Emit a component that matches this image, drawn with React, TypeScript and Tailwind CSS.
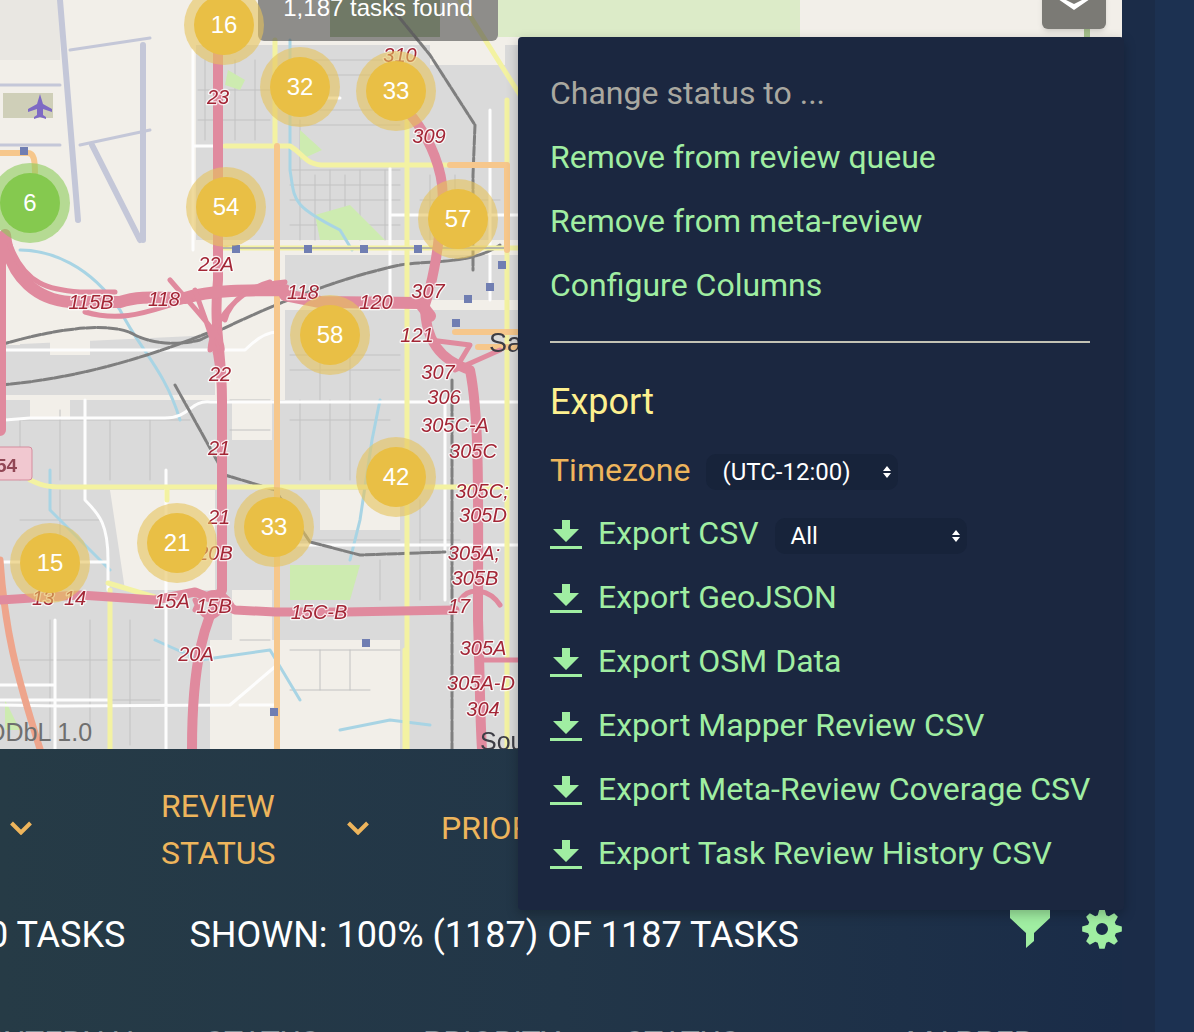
import React from 'react';

const menuLinks = ['Remove from review queue', 'Remove from meta-review', 'Configure Columns'];

const exportLinks = [
  'Export GeoJSON',
  'Export OSM Data',
  'Export Mapper Review CSV',
  'Export Meta-Review Coverage CSV',
  'Export Task Review History CSV',
];

const clusters = [
  { n: 16, x: 224, y: 25 },
  { n: 32, x: 300, y: 87 },
  { n: 33, x: 396, y: 91 },
  { n: 6, x: 30, y: 203, green: true },
  { n: 54, x: 226, y: 207 },
  { n: 57, x: 458, y: 219 },
  { n: 58, x: 330, y: 335 },
  { n: 42, x: 396, y: 477 },
  { n: 33, x: 274, y: 527 },
  { n: 21, x: 177, y: 543 },
  { n: 15, x: 50, y: 563 },
];

const roadLabels: [string, number, number][] = [
  ['23', 218, 104], ['310', 400, 62], ['309', 429, 143], ['22A', 216, 271], ['115B', 91, 309],
  ['118', 164, 306], ['118', 303, 299], ['120', 376, 309], ['307', 428, 298], ['121', 417, 342],
  ['22', 220, 381], ['307', 438, 379], ['306', 444, 404], ['305C-A', 455, 432], ['305C', 473, 458],
  ['21', 219, 455], ['21', 219, 524], ['305C;', 482, 498], ['305D', 483, 522], ['20B', 215, 560],
  ['305A;', 474, 560], ['305B', 475, 585], ['13', 43, 605], ['14', 75, 605], ['15A', 172, 608],
  ['15B', 214, 613], ['15C-B', 319, 619], ['17', 459, 613], ['20A', 196, 661], ['305A', 483, 655],
  ['305A-D', 481, 690], ['304', 483, 716],
];

const stations = [
  [24, 151], [236, 249], [308, 249], [364, 249], [418, 249], [502, 265], [490, 287], [468, 299],
  [456, 323], [366, 643], [274, 712],
];

// grid of thin minor streets on the grey residential blocks
const minorStreets = [
  'M205 60V140M235 60V140M255 60V140M300 120V240M315 175V240M330 170V240M345 175V240M360 170V240M385 170V240M430 175V240M455 175V240',
  'M198 90H270M198 120H270M290 60H400M290 75H380M290 110H400M290 125H400M290 170H400M290 185H400M290 200H400M290 225H400M420 200H500',
  'M20 420H190M20 480V420M60 410V480M110 420V480M150 420V480M290 420H390M330 400V480M350 400V480M300 400V480',
  'M240 640H270M290 650H400M320 650V690M350 650V690M290 690H370M50 620V740M90 620V740M20 660H160M20 700H160M130 620V745',
  'M420 500V600M445 400V600M420 540H460M230 400H270M230 430H270M290 540H400M380 560V600M290 355H400M290 370H400M320 345V400M350 345V400M20 520H100M60 490V560',
].join('');

function DownloadIcon() {
  return (
    <svg viewBox="0 0 32 32" className="mt-[6px] h-8 w-8 shrink-0 fill-[#a0eea2]">
      <path d="M12 0h8v9h9L16 22 3 9h9z" />
      <rect x="0" y="26" width="32" height="3" />
    </svg>
  );
}

function Chevron() {
  return (
    <svg viewBox="0 0 22 14" className="h-[14px] w-[22px] shrink-0 fill-none stroke-[#eeb55c] stroke-[4]">
      <path d="M1.5 2 11 11.5 20.5 2" />
    </svg>
  );
}

function SelectArrows() {
  return (
    <svg viewBox="0 0 8 12" className="h-3 w-2 fill-white">
      <path d="M4 0 8 5H0ZM0 7H8L4 12Z" />
    </svg>
  );
}

function gearPath() {
  const pts: string[] = [];
  for (let i = 0; i < 8; i++) {
    const a = (i * Math.PI) / 4 - Math.PI / 2;
    const at = (r: number, d: number) =>
      `${(20 + r * Math.cos(a + d)).toFixed(2)} ${(20 + r * Math.sin(a + d)).toFixed(2)}`;
    pts.push(at(14.5, -0.3), at(20, -0.13), at(20, 0.13), at(14.5, 0.3));
  }
  return `M${pts.join('L')}ZM26 20a6 6 0 1 0-12 0a6 6 0 1 0 12 0Z`;
}

function MapDrawing() {
  return (
    <svg viewBox="0 0 1122 749" className="absolute inset-0 h-full w-full">
      <defs>
        <filter id="soft">
          <feGaussianBlur stdDeviation="0.5" />
        </filter>
      </defs>
      <g filter="url(#soft)" fill="none" strokeLinejoin="round" strokeLinecap="round">
        <rect width="1122" height="749" fill="#f2efe9" />

        {/* residential blocks */}
        <g fill="#dadada" stroke="none">
          <path d="M196 45H520V240H196Z" />
          <path d="M285 255H520V300H285ZM285 310H520V400H285ZM0 345 215 335V395H0Z" />
          <path d="M0 400H520V640H0Z" />
          <path d="M0 620H520V749H0Z" />
        </g>
        <g fill="#f2efe9" stroke="none">
          <path d="M110 490H215V590H125ZM232 395H272V440H232ZM232 590H272V640H232ZM210 640H400V749H210ZM320 490H400V530H320ZM0 330H20V345H0Z" />
          <path d="M30 395H70V420H30ZM50 340H90V355H50ZM430 45H505V65H430Z" />
        </g>
        <path d="M0 0H60V60H0Z" fill="#e9e7e2" stroke="none" />
        <path d={minorStreets} stroke="#c2c2c2" strokeWidth="1" />

        {/* parks and water */}
        <g fill="#cdebb0" stroke="none">
          <path d="M228 70 245 80 240 90 225 85ZM300 130 322 150 300 160ZM315 215 350 205 385 240H320ZM290 565H360L350 600H290ZM5 700 20 730H5Z" />
          <path d="M330 0H440V37H330Z" fill="#a9be8e" />
          <path d="M498 0H800V37H498Z" fill="#dcebc8" />
          <path d="M1084 29H1090V37H1084Z" fill="#a9c48f" />
        </g>
        <path d="M20 250C50 250 90 265 120 310C140 350 165 370 180 420M290 40V170C295 200 290 205 340 230L352 250M380 400 372 440 360 520 350 560M50 470V510L110 570M155 640 200 660 270 650 300 700M340 730 390 720 430 725" stroke="#a8d4e4" strokeWidth="3" />

        {/* airport */}
        <g stroke="#c4c7d8" strokeWidth="6">
          <path d="M60 0 78 220M143 45V240M92 145 140 240" />
          <path d="M0 85H60M0 145H60M70 50 150 38M80 145 150 130" strokeWidth="3" />
        </g>
        <rect x="3" y="93" width="50" height="25" fill="#cfcfb8" />
        <path d="M40 94l3 10 9 5v3l-9-3v6l3 2v2l-6-2-6 2v-2l3-2v-6l-9 3v-3l9-5z" fill="#7e6bc4" />

        {/* white arterials */}
        <g stroke="#fdfdfd" strokeWidth="3">
          <path d="M193 50V250M193 146H225M340 98H285M390 168V300M390 215H520M490 110V300" />
          <path d="M0 350 50 350H245C260 335 270 332 277 332M5 420 30 418H165C190 418 190 400 210 402H277M277 402H520" />
          <path d="M85 400V500C100 515 108 525 108 560V590M0 562H108M0 700H55V685H0M277 545H520M55 620V749M166 470V749M110 700H55M0 705 60 706 230 705 277 665M240 705H277M445 400V600" />
        </g>

        {/* rail */}
        <g stroke="#7f7f7f" strokeWidth="3" strokeDasharray="9 2">
          <path d="M0 345C50 330 110 320 135 335 155 345 180 345 200 340 260 310 330 280 400 265 430 260 470 265 500 245" />
          <path d="M0 385C60 380 130 365 215 330" />
          <path d="M385 0 430 55 475 125 473 175V270M175 385 225 475 275 490 310 542 360 555 445 552" />
          <path d="M452 380V749" />
        </g>

        {/* secondary and tertiary */}
        <g stroke="#f3f2a2" strokeWidth="5">
          <path d="M275 40V146M225 146H290C305 155 305 165 325 165H450M407 100V749M507 100V749M460 0 520 95" />
          <path d="M30 480C45 487 50 487 70 487H500M167 487V500M108 583 158 598M110 590V749M405 650V749" />
          <path d="M215 248H520" />
        </g>
        <path d="M215 248H505" stroke="#b6b6a8" strokeWidth="2" />

        {/* primary */}
        <g stroke="#f6c78c" strokeWidth="6">
          <path d="M277 146V749M450 165H507V250M455 332H520M478 347H520M0 153H28C34 153 35 160 35 175" />
        </g>
        <path d="M0 560C5 630 15 670 40 749" stroke="#eea58c" strokeWidth="7" />
        <path d="M310 300 345 305" stroke="#eba35e" strokeWidth="5" />

        {/* motorways */}
        <g stroke="#e08a9e">
          <path d="M218 0V280C213 330 222 350 222 400V590C205 620 192 660 192 749" strokeWidth="10" />
          <path d="M0 240V430M5 235C10 280 40 300 70 302H120C140 295 160 298 185 298 210 290 250 290 285 290M285 295 320 302 420 303 430 316" strokeWidth="12" />
          <path d="M10 245C25 285 50 290 80 292H115M85 312C130 325 160 305 190 300M170 280C200 315 225 340 222 350M195 290C205 320 215 340 218 370M210 350C212 320 240 290 270 282M225 320C230 300 250 285 285 282" strokeWidth="5" />
          <path d="M396 100C430 130 450 180 440 215 440 250 430 290 425 305 425 340 440 360 470 370 480 420 478 500 478 620 480 680 480 720 482 749" strokeWidth="10" />
          <path d="M0 600 80 595 155 600 195 592 215 600 235 610 275 612 345 612 455 610" strokeWidth="9" />
          <path d="M195 610C205 585 225 590 232 605M195 600C205 625 215 620 228 602M460 600C470 585 490 590 500 605M480 660 520 660M430 340 470 345 455 370 500 350" strokeWidth="5" />
        </g>

        {stations.map(([x, y]) => (
          <rect key={`${x}-${y}`} x={x - 4} y={y - 4} width="8" height="8" fill="#6f7eb2" />
        ))}

        <rect x="-4" y="447" width="36" height="33" rx="3" fill="#f1c8d0" stroke="#d58d9e" strokeWidth="1" />
        <text x="-4" y="472" fontFamily="Liberation Sans" fontSize="19" fontWeight="700" fill="#914654">
          54
        </text>

        <g fontFamily="Liberation Sans" fontSize="20" fontStyle="italic" fill="#a32536" textAnchor="middle">
          {roadLabels.map(([t, x, y], i) => (
            <text key={i} x={x} y={y} className="[paint-order:stroke]" stroke="#ffffff" strokeWidth="2.5" strokeOpacity="0.8">
              {t}
            </text>
          ))}
        </g>
        <text x="489" y="352" fontFamily="Liberation Sans" fontSize="27" fill="#3c3c44">Sa</text>
        <text x="480" y="750" fontFamily="Liberation Sans" fontSize="25" fill="#3c3c44">Sou</text>
      </g>
    </svg>
  );
}

export default function App() {
  return (
    <div className="relative flex h-[1032px] w-[1194px] overflow-hidden bg-[#1c3151] font-['Roboto',sans-serif]">
      <div className="flex h-full w-[1122px] shrink-0 flex-col overflow-hidden bg-gradient-to-r from-[#263b46] via-[#223648] via-50% to-[#1a2c48]">
        {/* map */}
        <div className="relative h-[749px] shrink-0 overflow-hidden">
          <MapDrawing />

          <div className="absolute left-[258px] top-[-12px] flex h-[53px] w-[240px] items-start justify-center rounded-b-md bg-[#4b4b4b]/60 font-['Liberation_Sans',sans-serif] text-[24px] leading-[40px] text-white">
            1,187 tasks found
          </div>

          <div className="absolute left-[1042px] top-[-10px] flex h-[39px] w-[64px] justify-center rounded-md bg-[#7b7a75] shadow-md">
            <svg viewBox="0 0 32 12" className="mt-[8px] h-[12px] w-[32px] fill-white">
              <path d="M0 1 4 0 16 6 28 0 32 1 16 12z" />
            </svg>
          </div>

          {clusters.map((c) => (
            <div
              key={`${c.n}-${c.x}`}
              style={{ left: c.x - 40, top: c.y - 40 }}
              className={`absolute flex h-20 w-20 items-center justify-center rounded-full ${
                c.green ? 'bg-[#8ccb5a]/60' : 'bg-[#e6c35c]/60'
              }`}
            >
              <div
                className={`flex h-[60px] w-[60px] items-center justify-center rounded-full font-['Liberation_Sans',sans-serif] text-[24px] text-white ${
                  c.green ? 'bg-[#85c94f]' : 'bg-[#e9bf45]'
                }`}
              >
                {c.n}
              </div>
            </div>
          ))}

          <div className="absolute left-[-14px] top-[717px] font-['Liberation_Sans',sans-serif] text-[25px] leading-[30px] text-[#6f6f6f]">
            ODbL 1.0
          </div>
        </div>

        {/* table header */}
        <div className="flex h-[158px] shrink-0 items-center text-[32px] leading-[47px] text-[#eeb55c]">
          <div className="ml-[10px]">
            <Chevron />
          </div>
          <div className="ml-[129px] mt-1 w-[113px] text-center">REVIEW STATUS</div>
          <div className="ml-[73px]">
            <Chevron />
          </div>
          <div className="ml-[72px]">PRIORITY</div>
        </div>

        {/* totals */}
        <div className="flex items-center whitespace-nowrap text-[36px] leading-[56px] text-white">
          <span className="ml-[-12px]">0 TASKS</span>
          <span className="ml-[64px]">SHOWN: 100% (1187) OF 1187 TASKS</span>
        </div>

        {/* first table columns, only their tops are in view */}
        <div className="relative mt-[61px] h-10 whitespace-nowrap text-[32px] leading-[40px] text-[#7f8f98]">
          <span className="absolute left-[-6px] top-[-2px]">INTERNAL</span>
          <span className="absolute left-[205px] top-[-2px]">STATUS</span>
          <span className="absolute left-[423px] top-[-2px]">PRIORITY</span>
          <span className="absolute left-[625px] top-[-2px]">STATUS</span>
          <span className="absolute left-[906px] top-[-2px]">MAPPER</span>
        </div>
      </div>

      <div className="h-full w-[33px] shrink-0 bg-[#1b2c48]" />

      {/* footer icons */}
      <div className="absolute left-[1010px] top-[909px] flex items-start gap-[32px]">
        <svg viewBox="0 0 40 40" className="h-10 w-10 fill-[#a0eea2]">
          <path d="M0 0H40V9L24 24V32L16 39V24L0 9Z" />
        </svg>
        <svg viewBox="0 0 40 40" className="h-10 w-10 fill-[#a0eea2]">
          <path fillRule="evenodd" d={gearPath()} />
        </svg>
      </div>

      {/* actions menu */}
      <div className="absolute left-[518px] top-[37px] h-[873px] w-[606px] rounded-sm bg-[#1b2740] px-8 pt-[24px] text-[32px] leading-[64px] text-[#a0eea2] shadow-[0_4px_12px_rgba(0,0,0,0.25)]">
        <div className="text-[#a9a8a0]">Change status to ...</div>
        {menuLinks.map((item) => (
          <div key={item}>{item}</div>
        ))}
        <div className="mb-[27px] mt-[24px] h-[2px] w-[540px] bg-[#c3c2b4]" />
        <div className="text-[36px] text-[#fdf08f]">Export</div>
        <div className="flex h-[72px] items-center">
          <span className="text-[#eeb55c]">Timezone</span>
          <div className="ml-4 mt-1 flex h-9 w-[192px] items-center justify-between rounded-[10px] bg-[#17233a] pl-4 pr-[7px] text-[24px] leading-none text-white">
            (UTC-12:00)
            <SelectArrows />
          </div>
        </div>
        <div className="mb-[5px] flex h-[54px] items-center gap-4">
          <DownloadIcon />
          <span>Export CSV</span>
          <div className="mt-[6px] flex h-9 w-[192px] items-center justify-between rounded-[10px] bg-[#17233a] pl-4 pr-[7px] text-[24px] leading-none text-white">
            All
            <SelectArrows />
          </div>
        </div>
        {exportLinks.map((item) => (
          <div key={item} className="flex h-16 items-center gap-4">
            <DownloadIcon />
            <span className="whitespace-nowrap">{item}</span>
          </div>
        ))}
      </div>
    </div>
  );
}
